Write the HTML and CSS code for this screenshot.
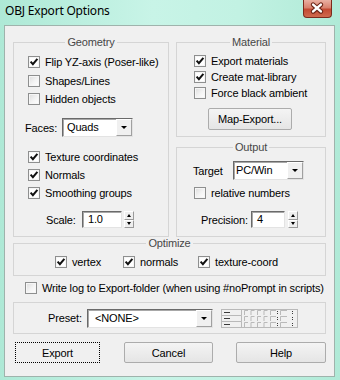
FILE: index.html
```html
<!DOCTYPE html>
<html>
<head>
<meta charset="utf-8">
<title>OBJ Export Options</title>
<link rel="stylesheet" href="styles.css">
</head>
<body>
<div class="window">
  <div class="titlebar">
    <span class="title">OBJ Export Options</span>
    <span class="close">
      <svg width="29" height="17" viewBox="0 0 29 17">
        <path d="M10.5 4.5 L18.5 11.5 M18.5 4.5 L10.5 11.5" stroke="#6b2416" stroke-width="4.8" stroke-linecap="round" fill="none"/>
        <path d="M10.5 4.5 L18.5 11.5 M18.5 4.5 L10.5 11.5" stroke="#ffffff" stroke-width="2.6" stroke-linecap="round" fill="none"/>
      </svg>
    </span>
  </div>
  <div class="client">
    <div class="top">
      <fieldset class="group geometry">
        <legend>Geometry</legend>
        <div class="gbody">
          <div class="check"><span class="box on"><svg width="10" height="10" viewBox="0 0 10 10"><path d="M1.6 4.6 L3.9 7.2 L8.4 1.8" /></svg></span><span>Flip YZ-axis (Poser-like)</span></div>
          <div class="check gap1"><span class="box"></span><span>Shapes/Lines</span></div>
          <div class="check"><span class="box"></span><span>Hidden objects</span></div>
          <div class="field faces">
            <span class="lbl faces-lbl">Faces:</span>
            <div class="combo faces-combo"><span class="val">Quads</span><span class="arrow"><i></i></span></div>
          </div>
          <div class="check tex"><span class="box on"><svg width="10" height="10" viewBox="0 0 10 10"><path d="M1.6 4.6 L3.9 7.2 L8.4 1.8" /></svg></span><span>Texture coordinates</span></div>
          <div class="check"><span class="box on"><svg width="10" height="10" viewBox="0 0 10 10"><path d="M1.6 4.6 L3.9 7.2 L8.4 1.8" /></svg></span><span>Normals</span></div>
          <div class="check"><span class="box on"><svg width="10" height="10" viewBox="0 0 10 10"><path d="M1.6 4.6 L3.9 7.2 L8.4 1.8" /></svg></span><span>Smoothing groups</span></div>
          <div class="field scale">
            <span class="lbl scale-lbl">Scale:</span>
            <span class="edit scale-edit">1.0</span>
            <span class="spin"><i class="up"><b></b></i><i class="dn"><b></b></i></span>
          </div>
        </div>
      </fieldset>
      <div class="rightcol">
        <fieldset class="group material">
          <legend>Material</legend>
          <div class="mbody">
            <div class="check small"><span class="box on"><svg width="10" height="10" viewBox="0 0 10 10"><path d="M1.6 4.6 L3.9 7.2 L8.4 1.8" /></svg></span><span>Export materials</span></div>
            <div class="check small"><span class="box on"><svg width="10" height="10" viewBox="0 0 10 10"><path d="M1.6 4.6 L3.9 7.2 L8.4 1.8" /></svg></span><span>Create mat-library</span></div>
            <div class="check small"><span class="box"></span><span>Force black ambient</span></div>
            <div class="btn mapbtn">Map-Export...</div>
          </div>
        </fieldset>
        <fieldset class="group output">
          <legend>Output</legend>
          <div class="obody">
            <div class="field target">
              <span class="lbl target-lbl">Target</span>
              <div class="combo target-combo"><span class="val">PC/Win</span><span class="arrow"><i></i></span></div>
            </div>
            <div class="check rel"><span class="box"></span><span>relative numbers</span></div>
            <div class="field precision">
              <span class="lbl prec-lbl">Precision:</span>
              <span class="edit prec-edit">4</span>
              <span class="spin"><i class="up"><b></b></i><i class="dn"><b></b></i></span>
            </div>
          </div>
        </fieldset>
      </div>
    </div>
    <fieldset class="group optimize">
      <legend>Optimize</legend>
      <div class="opbody">
        <div class="check op-vertex"><span class="box on"><svg width="10" height="10" viewBox="0 0 10 10"><path d="M1.6 4.6 L3.9 7.2 L8.4 1.8" /></svg></span><span>vertex</span></div>
        <div class="check op-normals"><span class="box on"><svg width="10" height="10" viewBox="0 0 10 10"><path d="M1.6 4.6 L3.9 7.2 L8.4 1.8" /></svg></span><span>normals</span></div>
        <div class="check op-tex"><span class="box on"><svg width="10" height="10" viewBox="0 0 10 10"><path d="M1.6 4.6 L3.9 7.2 L8.4 1.8" /></svg></span><span>texture-coord</span></div>
      </div>
    </fieldset>
    <div class="check writelog"><span class="box"></span><span>Write log to Export-folder (when using #noPrompt in scripts)</span></div>
    <div class="presetbox">
      <span class="lbl preset-lbl">Preset:</span>
      <div class="combo preset-combo"><span class="val">&lt;NONE&gt;</span><span class="arrow"><i></i></span></div>
      <span class="presetgrid">
        <svg width="77" height="19" viewBox="0 0 77 19">
          <g fill="none" stroke="#b9b9b9" stroke-width="1">
            <rect x="0.5" y="0.5" width="76" height="18"/>
            <path d="M0.5 6.5 H20.5 V0.5 M0.5 12.5 H20.5 V6.5 M20.5 18.5 V12.5"/>
            <path d="M23.5 6 V1.5 H27 M30 6 V1.5 H33.5 M36.5 6 V1.5 H40 M43 6 V1.5 H46.5 M49.5 6 V1.5 H55 M59.5 6 V1.5 H66"/>
            <path d="M23.5 12 V7.5 H27 M30 12 V7.5 H33.5 M36.5 12 V7.5 H40 M43 12 V7.5 H46.5 M49.5 12 V7.5 H55 M59.5 12 V7.5 H66"/>
            <path d="M23.5 18 V13.5 H27 M30 18 V13.5 H33.5 M36.5 18 V13.5 H40 M43 18 V13.5 H46.5 M49.5 18 V13.5 H55 M59.5 18 V13.5 H66"/>
          </g>
          <g stroke="#3a3a3a" stroke-width="1" fill="none">
            <path d="M3 3.5 H9 M3 9.5 H9 M3 15.5 H9"/>
          </g>
          <g fill="#3a3a3a">
            <rect x="56" y="2" width="1" height="1"/><rect x="56" y="4" width="1" height="1"/>
            <rect x="71" y="2" width="1" height="1"/><rect x="71" y="4" width="1" height="1"/>
            <rect x="56" y="8" width="1" height="1"/><rect x="56" y="10" width="1" height="1"/>
            <rect x="71" y="8" width="1" height="1"/><rect x="71" y="10" width="1" height="1"/>
            <rect x="56" y="14" width="1" height="1"/><rect x="56" y="16" width="1" height="1"/>
            <rect x="71" y="14" width="1" height="1"/><rect x="71" y="16" width="1" height="1"/>
          </g>
        </svg>
      </span>
    </div>
    <div class="buttons">
      <div class="btn export">Export</div>
      <div class="btn cancel">Cancel</div>
      <div class="btn help">Help</div>
    </div>
  </div>
</div>
</body>
</html>
```

FILE: styles.css
```css
* { box-sizing: border-box; }
html, body { margin: 0; padding: 0; }
body {
  width: 340px;
  height: 380px;
  overflow: hidden;
  background: linear-gradient(90deg, #aee9d6 0%, #c8f4e7 45%, #c2f2e3 70%, #b0ead7 100%);
  font-family: "Liberation Sans", Arial, sans-serif;
  font-size: 11px;
  letter-spacing: -0.15px;
  color: #000;
}
.window { width: 340px; height: 380px; display: flex; flex-direction: column; }

.titlebar {
  height: 25px;
  flex: none;
  display: flex;
  justify-content: space-between;
  align-items: flex-start;
  padding-left: 5px;
  padding-right: 8px;
}
.title {
  font-family: "Noto Sans", "Open Sans", sans-serif;
  font-size: 12px;
  letter-spacing: -0.2px;
  line-height: 16px;
  padding-top: 3px;
  color: #000;
}
.close {
  width: 29px;
  height: 18px;
  border: 1px solid #7c2a1c;
  border-top: none;
  border-radius: 0 0 4px 4px;
  background: linear-gradient(#eab0a2 0%, #d9826e 45%, #c44a32 55%, #cf6a4e 100%);
  display: flex;
  align-items: center;
  justify-content: center;
}
.close svg { display: block; margin-left: -1px; }

.client {
  margin-left: 4px;
  width: 331px;
  height: 352px;
  flex: none;
  background: #f0f0f0;
  border: 1px solid #9fb3ac;
  padding: 10px 8px 0 8px;
}

.top {
  display: grid;
  grid-template-columns: 156px 150px;
  column-gap: 7px;
}

fieldset.group {
  margin: 0;
  padding: 0;
  min-width: 0;
  border: 1px solid #d5d5d5;
}
fieldset.group legend {
  margin: 0 auto;
  padding: 0 2px;
  height: 13px;
  line-height: 13px;
  font-size: 11px;
  color: #474747;
}

.geometry { height: 201px; }
.gbody { padding: 4px 0 0 14px; }

.rightcol { display: flex; flex-direction: column; gap: 4px; }
.material { height: 101px; }
.mbody { padding: 4px 0 0 17px; }
.output { height: 96px; }
.obody { padding: 7px 0 0 16px; }

.check {
  display: flex;
  align-items: center;
  height: 18px;
  white-space: nowrap;
}
.check.small { height: 16px; }
.check.gap1 { margin-top: 1px; }
.box {
  width: 12px;
  height: 12px;
  flex: none;
  margin-right: 5px;
  border: 1px solid #8e8f8f;
  background: linear-gradient(135deg, #dcdcdc 0%, #f4f4f4 55%, #ffffff 100%);
  box-shadow: inset 0 0 0 1px #f6f6f6;
  display: flex;
  align-items: center;
  justify-content: center;
}
.box.on { background: #ffffff; }
.box svg { display: block; }
.box svg path { fill: none; stroke: #111; stroke-width: 2; stroke-linejoin: miter; }

.field { display: flex; align-items: center; white-space: nowrap; }
.lbl { flex: none; }

.faces { margin-top: 10px; margin-left: -3px; height: 19px; }
.faces-lbl { width: 37px; }
.faces-combo { width: 71px; }
.tex { margin-top: 11px; }
.scale { margin-top: 9px; margin-left: 18px; height: 17px; }
.scale-lbl { width: 36px; }
.scale-edit { width: 40px; }

.combo {
  height: 19px;
  display: flex;
  align-items: stretch;
  background: #fff;
  border: 1px solid;
  border-color: #6a6a6a #e3e3e3 #e3e3e3 #6a6a6a;
  box-shadow: inset 1px 1px 0 #a8a8a8;
}
.combo .val { flex: 1; padding-left: 4px; line-height: 17px; }
.combo .arrow {
  width: 16px;
  flex: none;
  background: #f0f0f0;
  border: 1px solid;
  border-color: #ffffff #a0a0a0 #a0a0a0 #ffffff;
  display: flex;
  align-items: center;
  justify-content: center;
}
.combo .arrow i {
  width: 0; height: 0;
  border-left: 3px solid transparent;
  border-right: 3px solid transparent;
  border-top: 3px solid #000;
}

.edit {
  height: 17px;
  display: block;
  background: #fff;
  border: 1px solid;
  border-color: #6a6a6a #e3e3e3 #e3e3e3 #6a6a6a;
  box-shadow: inset 1px 1px 0 #a8a8a8;
  padding-left: 5px;
  line-height: 15px;
}
.spin {
  width: 10px;
  height: 17px;
  margin-left: 2px;
  display: flex;
  flex-direction: column;
}
.spin i {
  flex: 1;
  display: flex;
  align-items: center;
  justify-content: center;
  background: #efefef;
  border: 1px solid;
  border-color: #ffffff #9a9a9a #9a9a9a #ffffff;
}
.spin b { width: 0; height: 0; border-left: 2.5px solid transparent; border-right: 2.5px solid transparent; }
.spin .up b { border-bottom: 3px solid #000; }
.spin .dn b { border-top: 3px solid #000; }

.btn {
  height: 22px;
  display: flex;
  align-items: center;
  justify-content: center;
  border: 1px solid #acacac;
  border-radius: 2px;
  background: linear-gradient(#f4f4f4, #e5e5e5);
  white-space: nowrap;
}
.mapbtn { width: 84px; margin-top: 7px; margin-left: 14px; }

.target { height: 19px; }
.target-lbl { width: 40px; }
.target-combo { width: 71px; }
.target-combo .val { padding-left: 2px; }
.rel { margin-top: 4px; margin-left: 1px; }
.precision { margin-top: 9px; margin-left: 8px; height: 17px; }
.prec-lbl { width: 50px; }
.prec-edit { width: 34px; }
.precision .spin { margin-left: 3px; }

.optimize { height: 39px; margin-top: 4px; }
.opbody { display: flex; padding: 3px 0 0 41px; }
.op-vertex { width: 68px; }
.op-normals { width: 75px; }

.writelog { margin-top: 4px; margin-left: 12px; height: 16px; }

.presetbox {
  margin-top: 6px;
  height: 32px;
  border: 1px solid #d5d5d5;
  display: flex;
  align-items: flex-start;
  padding: 6px 0 0 34px;
}
.preset-lbl { width: 39px; line-height: 19px; }
.preset-combo { width: 126px; }
.preset-combo .val { padding-left: 7px; }
.presetgrid { margin-left: 8px; display: block; height: 19px; }
.presetgrid svg { display: block; }

.buttons { display: flex; margin-top: 8px; }
.buttons .btn { height: 21px; }
.export { width: 85px; margin-left: 2px; border: 1px dotted #000; border-radius: 0; background: #f0f0f0; }
.cancel { width: 89px; margin-left: 24px; }
.help { width: 90px; margin-left: 23px; }
```
